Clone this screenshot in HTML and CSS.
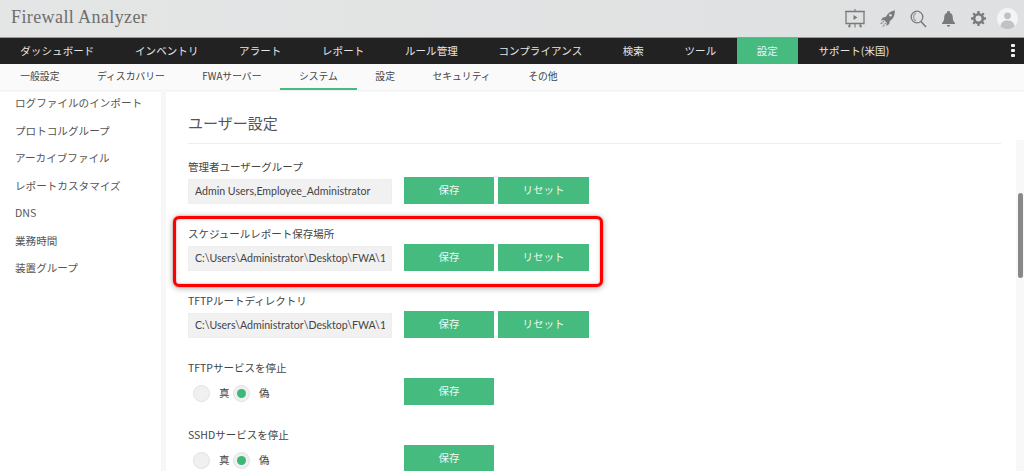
FILE: index.html
```html
<!DOCTYPE html>
<html lang="ja">
<head>
<meta charset="utf-8">
<title>Firewall Analyzer</title>
<link rel="stylesheet" href="styles.css">
</head>
<body>
<header class="topbar">
  <div class="brand">Firewall Analyzer</div>
  <div class="tools">
    <svg class="ic-screen" width="20" height="19" viewBox="0 0 20 19"><path d="M1 2.500h18v12H1z" fill="none" stroke="#7a7a7a" stroke-width="1.300"/><path d="M0 2.500h20M10 0v2.500M5 14.500l-1 4M15 14.500l1 4M10 14.500v4M3 17h3M14 17h3" stroke="#7a7a7a" stroke-width="1.100" fill="none"/><path d="M8.500 6l4 2.500-4 2.500z" fill="#7a7a7a"/></svg>
    <svg class="ic-rocket" width="15" height="18" viewBox="0 0 15 18"><path d="M14.800.2C10.600 1 7.800 3.300 5.600 7L2.800 7.600.8 10.400l3.300-.3 2.600 2.700-.3 3.200 2.800-2 .7-2.900c3.600-2.400 5.200-5.900 4.900-10.900z" fill="#7a7a7a"/><circle cx="10.400" cy="5.200" r="1.300" fill="#e0e1e2"/><path d="M3.900 11.200l-2.900 3M5.700 13l-3 3.400M1.600 12.600L.3 13.900M4.400 14.900L3 17" stroke="#858585" stroke-width="1.100" stroke-dasharray="1.300 .7" fill="none"/></svg>
    <svg class="ic-search" width="17" height="18" viewBox="0 0 17 18"><circle cx="7" cy="7" r="5.800" fill="none" stroke="#7a7a7a" stroke-width="1.300"/><path d="M6 3A4.500 4.500 0 0 0 6 11" fill="none" stroke="#9a9a9a" stroke-width="1.200"/><path d="M11 11.500l5 5.500" stroke="#7a7a7a" stroke-width="1.600"/></svg>
    <svg class="ic-bell" width="13" height="16" viewBox="0 0 13 16"><path d="M6.500 0a1.300 1.300 0 0 1 1.300 1.700c2.400.7 3 2.700 3 5 0 2.500.8 3.800 2.200 5.300v1H0v-1c1.400-1.500 2.200-2.800 2.200-5.300 0-2.300.6-4.300 3-5A1.300 1.300 0 0 1 6.500 0zM4.800 14h3.400a1.700 1.700 0 0 1-3.400 0z" fill="#7a7a7a"/></svg>
    <svg class="ic-gear" width="15" height="15" viewBox="0 0 15 15"><circle cx="7.500" cy="7.500" r="4.300" fill="none" stroke="#7a7a7a" stroke-width="2.600"/><path d="M7.500 0v3M7.500 12v3M0 7.500h3M12 7.500h3M2.200 2.200l2 2M10.800 10.800l2 2M2.200 12.800l2-2M10.800 4.200l2-2" stroke="#7a7a7a" stroke-width="2.300"/></svg>
    <svg class="ic-avatar" width="21" height="21" viewBox="0 0 21 21"><circle cx="10.500" cy="10.500" r="10.500" fill="#f4f4f4"/><circle cx="10.500" cy="7.800" r="3.400" fill="#c2c2c2"/><path d="M3.500 18.500c.3-4.200 3-6 7-6s6.700 1.800 7 6a10.500 10.500 0 0 1-14 0z" fill="#c2c2c2"/></svg>
  </div>
</header>

<nav class="mainnav">
  <a class="mainnav-item">ダッシュボード</a>
  <a class="mainnav-item">インベントリ</a>
  <a class="mainnav-item">アラート</a>
  <a class="mainnav-item">レポート</a>
  <a class="mainnav-item">ルール管理</a>
  <a class="mainnav-item">コンプライアンス</a>
  <a class="mainnav-item">検索</a>
  <a class="mainnav-item">ツール</a>
  <a class="mainnav-item is-active">設定</a>
  <a class="mainnav-item">サポート(米国)</a>
  <span class="kebab"><i></i><i></i><i></i></span>
</nav>

<nav class="subnav">
  <a class="subnav-item">一般設定</a>
  <a class="subnav-item">ディスカバリー</a>
  <a class="subnav-item">FWAサーバー</a>
  <a class="subnav-item is-active">システム</a>
  <a class="subnav-item">設定</a>
  <a class="subnav-item">セキュリティ</a>
  <a class="subnav-item">その他</a>
</nav>

<div class="body">
  <aside class="side">
    <a>ログファイルのインポート</a>
    <a>プロトコルグループ</a>
    <a>アーカイブファイル</a>
    <a>レポートカスタマイズ</a>
    <a>DNS</a>
    <a>業務時間</a>
    <a>装置グループ</a>
  </aside>
  <main class="content">
    <h1 class="title">ユーザー設定</h1>
    <div class="rows">
      <section class="row">
        <label class="lbl">管理者ユーザーグループ</label>
        <div class="ctl">
          <input class="field" value="Admin Users,Employee_Administrator" readonly>
          <button class="btn">保存</button><button class="btn">リセット</button>
        </div>
      </section>
      <section class="row">
        <label class="lbl">スケジュールレポート保存場所</label>
        <div class="ctl">
          <input class="field" value="C:\Users\Administrator\Desktop\FWA\12345" readonly>
          <button class="btn">保存</button><button class="btn">リセット</button>
        </div>
      </section>
      <section class="row">
        <label class="lbl">TFTPルートディレクトリ</label>
        <div class="ctl">
          <input class="field" value="C:\Users\Administrator\Desktop\FWA\12345" readonly>
          <button class="btn">保存</button><button class="btn">リセット</button>
        </div>
      </section>
      <section class="row">
        <label class="lbl">TFTPサービスを停止</label>
        <div class="ctl">
          <div class="radios"><span class="radio"></span><span class="rtxt">真</span><span class="radio on"></span><span class="rtxt">偽</span></div>
          <button class="btn">保存</button>
        </div>
      </section>
      <section class="row">
        <label class="lbl">SSHDサービスを停止</label>
        <div class="ctl">
          <div class="radios"><span class="radio"></span><span class="rtxt">真</span><span class="radio on"></span><span class="rtxt">偽</span></div>
          <button class="btn">保存</button>
        </div>
      </section>
    </div>
    <div class="callout"></div>
  </main>
  <div class="track"><div class="thumb"></div></div>
</div>
</body>
</html>
```
FILE: styles.css
```css
* { box-sizing: border-box; }
html, body { margin: 0; height: 100%; overflow: hidden; }
body {
  width: 1024px;
  height: 471px;
  display: flex;
  flex-direction: column;
  background: #fff;
  color: #555;
  font-family: "Noto Sans CJK JP", "Lato", sans-serif;
  font-size: 11px;
}
.topbar {
  height: 38px;
  flex: none;
  display: flex;
  align-items: center;
  justify-content: space-between;
  padding: 0 6px 0 11px;
  background: linear-gradient(90deg, #e4e5e5, #dfe0e1);
  border-bottom: 1px solid #9a9a9a;
}
.brand {
  font-family: "Liberation Serif", serif;
  font-size: 18px;
  color: #6e6e6e;
  letter-spacing: 0.4px;
  margin-top: -2px;
}
.tools { display: flex; align-items: center; }
.ic-screen { margin-right: 15px; }
.ic-rocket { margin-right: 15px; }
.ic-search { margin-right: 15px; }
.ic-bell { margin-right: 16px; }
.ic-gear { margin-right: 11px; }
.mainnav {
  height: 26px;
  flex: none;
  display: flex;
  background: #222;
  position: relative;
}
.mainnav-item {
  padding: 0 20.250px;
  line-height: 26px;
  color: #e6e6e6;
  font-size: 10.500px;
  letter-spacing: 0.1px;
  white-space: nowrap;
}
.mainnav-item.is-active { background: #46bb7f; color: #eef; }
.kebab {
  position: absolute;
  left: 1011px;
  top: 6px;
  display: flex;
  flex-direction: column;
  gap: 2px;
}
.kebab i { width: 4px; height: 3px; background: #f2f2f2; border-radius: 1px; display: block; }
.subnav {
  height: 26px;
  flex: none;
  display: flex;
  padding-left: 1.500px;
  background: #fafafa;
  box-shadow: 0 1px 2px rgba(0,0,0,.08);
  position: relative;
}
.subnav-item {
  padding: 0 18.750px;
  line-height: 24px;
  height: 26px;
  font-size: 9.800px;
  color: #444;
  white-space: nowrap;
}
.subnav-item.is-active { border-bottom: 2px solid #46bb7f; }
.body { flex: 1; min-height: 0; display: flex; position: relative; }
.side {
  width: 166px;
  flex: none;
  display: flex;
  flex-direction: column;
  margin-top: -1px;
  padding: 0 0 0 15px;
  border-right: 5px solid #f7f7f7;
}
.side a {
  height: 27.500px;
  line-height: 27px;
  font-size: 10.600px;
  color: #555;
}
.content { flex: 1; position: relative; padding: 0 0 0 22px; }
.title {
  margin: 21px 0 0;
  width: 813px;
  height: 33px;
  border-bottom: 1px solid #eee;
  font-size: 15px;
  font-weight: 400;
  line-height: 23px;
  color: #555;
}
.rows { display: flex; flex-direction: column; gap: 20px; margin-top: 13px; }
.row { display: flex; flex-direction: column; }
.lbl { height: 20px; line-height: 20px; font-size: 10.500px; color: #444; }
.ctl { display: flex; align-items: flex-end; height: 27px; }
.field {
  width: 204px;
  height: 25px;
  margin: 0 12px 0 0;
  padding: 0 6px 2px;
  border: 1px solid #eee;
  background: #f1f1f1;
  color: #444;
  font-family: "Lato", sans-serif;
  font-size: 10.600px;
  outline: 0;
  border-radius: 0;
}
.btn {
  width: 90px;
  height: 27px;
  margin-right: 4px;
  padding: 0 0 3px;
  border: 0;
  background: #46bb7f;
  color: #eef8f2;
  font-family: "Noto Sans CJK JP", sans-serif;
  font-size: 10.500px;
}
.btn + .btn { width: 91px; }
.radios { width: 216px; height: 27px; display: flex; align-items: flex-end; padding: 0 0 3px 5px; }
.radio {
  width: 17px;
  height: 17px;
  border-radius: 50%;
  background: #f0f0f0;
  border: 1px solid #e2e2e2;
  display: flex;
  align-items: center;
  justify-content: center;
}
.radio.on::after { content: ""; width: 9px; height: 9px; border-radius: 50%; background: #3cb878; }
.rtxt { width: 23px; padding-left: 9px; line-height: 15px; align-self: flex-start; margin-top: 7px; font-size: 10.500px; color: #444; }
.callout {
  position: absolute;
  left: 7px;
  top: 126px;
  width: 430px;
  height: 71px;
  border: 3px solid #f00;
  border-radius: 6px;
  box-shadow: 0 0 1px #f00, 0 1px 6px rgba(0,0,0,.35), inset 0 0 1px #f00, inset 0 0 5px rgba(0,0,0,.12);
  pointer-events: none;
}
.track {
  position: absolute;
  right: 0;
  top: 50px;
  bottom: 0;
  width: 8px;
  background: #f8f8f8;
}
.thumb {
  position: absolute;
  left: 2px;
  top: 53px;
  width: 5px;
  height: 85px;
  border-radius: 3px;
  background: #888;
}
```
